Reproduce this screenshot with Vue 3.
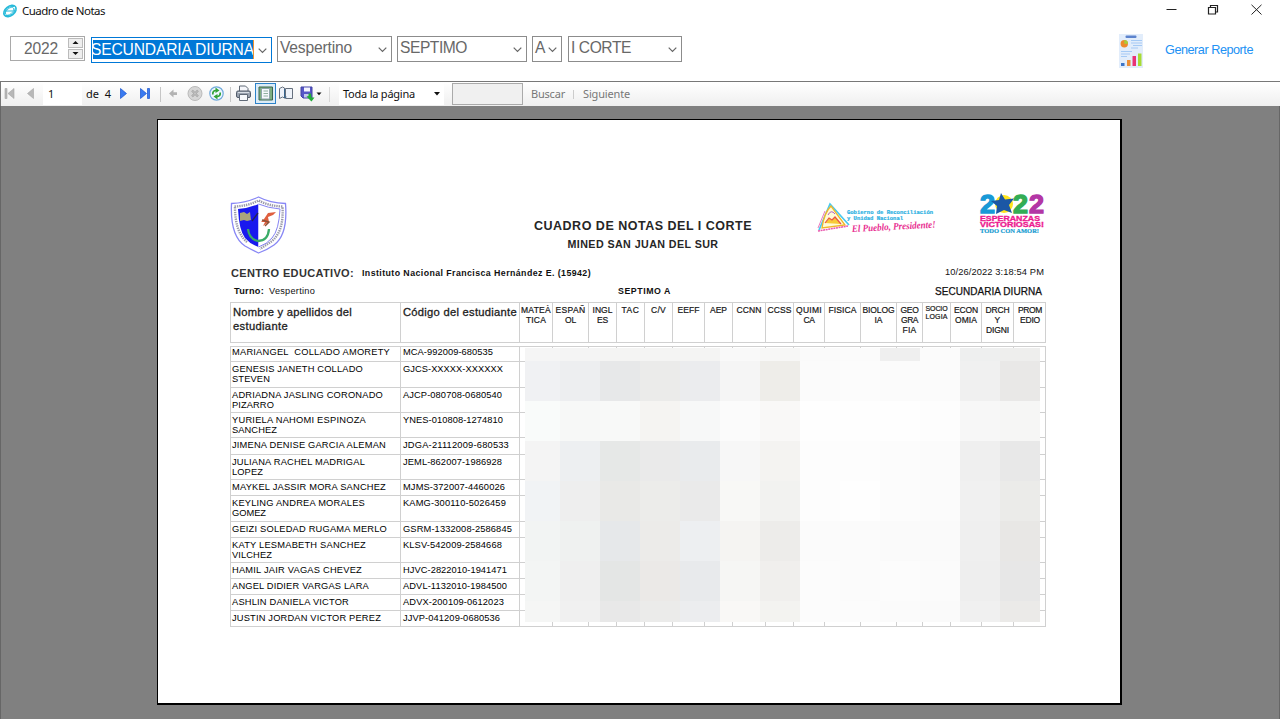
<script setup>
const fitText = (el, { value }) => {
  el.style.letterSpacing = '0px'
  const natural = el.getBoundingClientRect().width
  const count = el.textContent.trim().length
  if (count > 0) el.style.letterSpacing = `${(value - natural) / count}px`
}
const vFit = { mounted: fitText }

const combos = [
  { text: 'Vespertino', size: 'turn', w: 72 },
  { text: 'SEPTIMO', size: 'grade', w: 67 },
  { text: 'A', size: 'group', w: 10 },
  { text: 'I CORTE', size: 'term', w: 60 },
]

const subjects = [
  [['MATEÀ', 30], ['TICA', 20]],
  [['ESPAÑ', 30], ['OL', 11]],
  [['INGL', 20], ['ES', 11]],
  [['TAC', 18]],
  [['C/V', 15]],
  [['EEFF', 22]],
  [['AEP', 17]],
  [['CCNN', 25]],
  [['CCSS', 24]],
  [['QUIMI', 26], ['CA', 11]],
  [['FISICA', 28]],
  [['BIOLOG', 32], ['IA', 8]],
  [['GEO', 18], ['GRA', 17], ['FIA', 14]],
  [['SOCIO', 22], ['LOGIA', 22]],
  [['ECON', 24], ['OMIA', 22]],
  [['DRCH', 24], ['Y', 6], ['DIGNI', 23]],
  [['PROM', 24], ['EDIO', 20]],
]

const students = [
  { name: [['MARIANGEL\u00a0 COLLADO AMORETY', 158]], code: 'MCA-992009-680535', w: 90 },
  { name: [['GENESIS JANETH COLLADO', 131], ['STEVEN', 38]], code: 'GJCS-XXXXX-XXXXXX', w: 100 },
  { name: [['ADRIADNA JASLING CORONADO', 151], ['PIZARRO', 42]], code: 'AJCP-080708-0680540', w: 99 },
  { name: [['YURIELA NAHOMI ESPINOZA', 134], ['SANCHEZ', 45]], code: 'YNES-010808-1274810', w: 100 },
  { name: [['JIMENA DENISE GARCIA ALEMAN', 154]], code: 'JDGA-21112009-680533', w: 106 },
  { name: [['JULIANA RACHEL MADRIGAL', 133], ['LOPEZ', 31]], code: 'JEML-862007-1986928', w: 99 },
  { name: [['MAYKEL JASSIR MORA SANCHEZ', 154]], code: 'MJMS-372007-4460026', w: 102 },
  { name: [['KEYLING ANDREA MORALES', 133], ['GOMEZ', 34]], code: 'KAMG-300110-5026459', w: 103 },
  { name: [['GEIZI SOLEDAD RUGAMA MERLO', 155]], code: 'GSRM-1332008-2586845', w: 109 },
  { name: [['KATY LESMABETH SANCHEZ', 134], ['VILCHEZ', 40]], code: 'KLSV-542009-2584668', w: 99 },
  { name: [['HAMIL JAIR VAGAS CHEVEZ', 130]], code: 'HJVC-2822010-1941471', w: 104 },
  { name: [['ANGEL DIDIER VARGAS LARA', 137]], code: 'ADVL-1132010-1984500', w: 104 },
  { name: [['ASHLIN DANIELA VICTOR', 117]], code: 'ADVX-200109-0612023', w: 101 },
  { name: [['JUSTIN JORDAN VICTOR PEREZ', 149]], code: 'JJVP-041209-0680536', w: 97 },
]

const mosaic = [
  '#f5f5f5 #f4f4f4 #f4f4f3 #f4f4f3 #f4f4f3 #f9f9f9 #f7f7f6 #fafafa #fbfbfb #efefef #fbfbfb #eeefef #eeeeed',
  '#f0f1f3 #edeef0 #e7e8e9 #ebebea #ebecee #f5f5f5 #eeede9 #fbfbfb #fcfcfc #fbfbfb #fbfbfb #f0f0f0 #e9e8e7',
  '#f9fbfa #f7f8f7 #f8f9f8 #f5f4f2 #f7f8f8 #fbfbfb #f9f8f7 #fefefe #fefefe #fefefe #fdfdfd #f7f7f7 #f6f6f5',
  '#f4f4f4 #edeff1 #e6e8e7 #eaeaea #e9ebed #f7f7f7 #f4f3f1 #fdfdfd #fdfdfd #fcfcfc #fbfbfb #efefef #e8e8e8',
  '#f1f3f5 #eeeeee #e9e9e7 #ececea #eaeaea #f8f8f6 #f2f2f0 #fdfdfd #fefefe #fcfcfc #fbfbfb #f0f0f0 #ebebe9',
  '#f2f4f3 #eff1f0 #e6e8ea #ecebe9 #edeff1 #f5f4f2 #edecea #fbfbfb #fbfbfb #fafafa #fafafa #efefef #e8e7e5',
  '#f3f5f4 #efefef #e4e6e5 #ebe9e7 #e8eaec #f6f6f4 #f0efed #fcfcfc #fbfbfb #fcfcfc #fbfbfb #eeeeee #e7e7e7',
  '#f5f6f5 #f0f0f0 #e8e8e8 #ebebea #ecedef #f9f8f6 #f3f3f0 #fcfcfc #fcfcfc #fbfbfb #fafafa #f0f0f0 #ebeae8',
].map((row) => row.split(' '))
</script>

<template>
  <div class="window">
    <header class="titlebar">
      <svg class="app-icon" width="16" height="16" viewBox="0 0 16 16">
        <g fill="none" stroke="#25b9d9" transform="rotate(-38 8 8)">
          <ellipse cx="8" cy="8" rx="7" ry="4.700" stroke-width="1.500" />
          <ellipse cx="7.500" cy="8" rx="5" ry="2.800" stroke-width=".8" />
          <path d="M2 7Q8 1 14 7M2 9Q8 15 14 9M4 5L12 11" stroke-width=".9" />
        </g>
      </svg>
      <span class="caption"><span v-fit="83" class="run">Cuadro de Notas</span></span>
      <svg class="controls" width="110" height="22" viewBox="0 0 110 22" fill="none" stroke="#222" stroke-width="1">
        <path d="M6.500 9.500H16.500" />
        <path d="M48.500 7.500h7v6.500h-7zM50.500 7.500v-2h7v6.500h-2" stroke-width="1.200" />
        <path d="M91.500 4.800l10 9.700M101.500 4.800l-10 9.700" />
      </svg>
    </header>

    <section class="filters">
      <div class="spinner">
        <span class="year"><span v-fit="34" class="run">2022</span></span>
        <div class="steps">
          <i><svg width="13" height="10" viewBox="0 0 13 10"><path d="M3.500 6L6.500 3L9.500 6z" /></svg></i>
          <i><svg width="13" height="10" viewBox="0 0 13 10"><path d="M3.500 3L6.500 6L9.500 3z" /></svg></i>
        </div>
      </div>
      <div class="combo level">
        <span class="selected"><span v-fit="163" class="run">SECUNDARIA DIURNA</span></span>
        <svg width="9" height="6" viewBox="0 0 9 6"><path d="M.7.700L4.500 4.500L8.300.7" /></svg>
      </div>
      <div v-for="c in combos" :key="c.text" class="combo" :class="c.size">
        <span class="value"><span v-fit="c.w" class="run">{{ c.text }}</span></span>
        <svg width="9" height="6" viewBox="0 0 9 6"><path d="M.7.700L4.500 4.500L8.300.7" /></svg>
      </div>
      <button class="generate">
        <svg width="24" height="34" viewBox="0 0 24 34">
          <rect width="24" height="34" fill="#e2edfb" />
          <rect x="6.500" y="1.500" width="11" height="2.600" rx="1" fill="#5c83cd" />
          <circle cx="5.300" cy="9.700" r="3.700" fill="#ed8b2c" />
          <path d="M5.300 9.700V6a3.700 3.700 0 0 1 3.700 3.700z" fill="#a6cf3d" />
          <path d="M12 6.500h11M12 9h11M14 11.500h9M12 14h7M2 17.500h11M2 20h9M2 22.500h6" stroke="#a5caf5" stroke-width="1.200" />
          <path d="M2 29h3.500v3H2z" fill="#3b75c9" /><path d="M8 26h3.500v6H8z" fill="#ec8e36" />
          <path d="M13.500 22H17v10h-3.500z" fill="#ea3275" /><path d="M19 19.500h3.500V32H19z" fill="#a8db34" />
        </svg>
        <span class="generate-label"><span v-fit="88" class="run">Generar Reporte</span></span>
      </button>
    </section>

    <nav class="viewer-bar">
      <svg class="nav-first" width="42" height="24" viewBox="0 0 42 24" fill="#b8b8b8" stroke="#a5a5a5" stroke-width=".6">
        <path d="M4 6.500h2v10H4zM13 6.500v10l-6-5zM32.500 6.500v10l-6-5z" />
      </svg>
      <span class="page-no">1</span>
      <span class="page-total"><span v-fit="25" class="run">de&nbsp; 4</span></span>
      <svg class="nav-last" width="55" height="24" viewBox="0 0 55 24">
        <g fill="#397af0" stroke="#1552ce" stroke-width=".7"><path d="M3.500 6.500v10l6-5zM23.500 6.500v10l6-5zM30.500 6.500h2v10h-2z" /></g>
        <path d="M43.500 5v15" stroke="#c6c6c6" />
      </svg>
      <svg class="tools" width="162" height="24" viewBox="0 0 162 24">
        <path d="M1 11.500l4.500-4v2.700h3.500v2.700H5.500v2.700z" fill="#b3b3b3" />
        <circle cx="27" cy="11.500" r="7" fill="#d6d6d6" stroke="#bababa" />
        <path d="M24 8.500l6 6m0-6l-6 6" stroke="#a0a0a0" stroke-width="2.300" /><path d="M24 8.500l6 6m0-6l-6 6" stroke="#ddd" stroke-width=".7" />
        <circle cx="48.500" cy="11.500" r="6.700" fill="#edf6ff" stroke="#70a9dc" stroke-width="1.200" />
        <g fill="none" stroke="#30a337" stroke-width="1.700"><path d="M44.800 12.500q-.3-4 3.200-4M52.200 10.500q.3 4-3.200 4" /></g>
        <path d="M47.500 5.500l4 3l-4 2.500zM49.500 12l-4 2.500l4 3z" fill="#30a337" />
        <path d="M62.500 5v15" stroke="#c6c6c6" />
        <g><path d="M71.500 9V4h6l2.500 2.500V9" fill="#f5f6fa" stroke="#5f6874" /><rect x="68.500" y="9" width="14" height="6.500" rx="1.500" fill="#99a2af" stroke="#515b69" /><path d="M71.500 12.500h8v6h-8z" fill="#f6f9fc" stroke="#606a77" /><path d="M70 10.500h11" stroke="#d8dee5" /></g>
        <rect x="87.500" y="1.500" width="20" height="20" fill="#dcecf7" stroke="#2c82c9" />
        <path d="M91 5h13.500v13H91z" fill="#7eae80" stroke="#3c6650" /><path d="M93.500 6.500h8v10.500h-8z" fill="#f5f8fd" stroke="#8ea5ab" /><path d="M95.500 9h4.500M95.500 11.500h4.500M95.500 14h4.500" stroke="#8fb0a0" />
        <g fill="#eef2f9" stroke="#66707e"><path d="M111.500 6.500l3-1.500l2 1v10l-2-1l-3 1.500zM117.500 6.500h7v10h-7z" /></g><path d="M116.500 7v9l2-1" fill="none" stroke="#38658d" />
        <path d="M133 5h11v11h-9l-2-2z" fill="#5657c7" stroke="#4242a4" /><path d="M136 5.500h6v4h-6z" fill="#f4f4ff" /><path d="M136 12h5v3.500h-5z" fill="#c5c9ee" /><path d="M140.500 11.500v2.500l-2 .5l5 5l3-4h-3l-.5-4z" fill="#22ac38" />
        <path d="M148.500 10.500h5l-2.500 2.700z" fill="#111" /><path d="M162 5v15" stroke="#bbb" />
      </svg>
      <div class="zoom"><span><span v-fit="72" class="run">Toda la página</span></span><svg width="6" height="4" viewBox="0 0 6 4"><path d="M0 0h6L3 3.500z" fill="#111" /></svg></div>
      <div class="search-box"></div>
      <span class="search"><span v-fit="34" class="run">Buscar</span></span>
      <i class="bar"></i>
      <span class="next"><span v-fit="47" class="run">Siguiente</span></span>
    </nav>

    <main class="viewport">
      <article class="sheet">
        <div class="masthead">
          <svg class="shield" width="57" height="58" viewBox="0 0 57 58">
            <path d="M1.500 7.500Q16 7 28.500 1Q40 7 55.500 7.500Q58 39 44 49Q37 54 28.500 57Q22 54 15 50Q0 40 1.500 7.500z" fill="#fff" stroke="#8887f5" stroke-width="1.300" />
            <path d="M4.500 10.500Q18 10 28.500 4.500Q39 10 52.500 10.500Q54 35 42 45L30 53" fill="none" stroke="#9a9aab" stroke-width="2.400" stroke-dasharray="1.400 .9" />
            <path d="M5 11Q5 36 17 46" fill="none" stroke="#9a9aab" stroke-width="2.400" stroke-dasharray="1.400 .9" />
            <path d="M8 13Q20 12 28.500 8V51Q20 48 15 42Q9 34 8 13z" fill="#1919ee" />
            <path d="M28.500 8Q38 12 50 13Q49 34 42 42Q37 48 28.500 51" fill="#fff" stroke="#8583f3" />
            <path d="M10 17l4-1l3 2l3-2l1 8l-4 1l-3-1l-4 1z" fill="#a9a57c" /><path d="M22 25l6-8" stroke="#252553" stroke-width="1.300" />
            <path d="M34 23l4-6l8-1l-3 3l-5 2l1 5l-6 4l2-4h-4z" fill="#df5f3f" /><path d="M32 24l7 2l-4 4" fill="none" stroke="#8b5237" stroke-width="1.400" />
            <path d="M18 33Q19 43 28 45Q38 45 39 33" fill="none" stroke="#3bac68" stroke-width="2.300" />
          </svg>
          <div class="heading">
            <h1><span v-fit="218" class="run">CUADRO DE NOTAS DEL I CORTE</span></h1>
            <h2><span v-fit="151" class="run">MINED SAN JUAN DEL SUR</span></h2>
          </div>
          <svg class="government" width="122" height="34" viewBox="0 0 122 34">
            <path d="M2 29L13 3L32 24" fill="none" stroke="#48c9ef" stroke-width="1.700" />
            <path d="M5 27Q7 12 14 5L28 24z" fill="#fffbd7" stroke="#f0b629" stroke-width="1.300" />
            <path d="M8 22l4-5l3 2l3-3l6 7" fill="#f8ca38" stroke="#e95447" stroke-width="1.200" /><path d="M11 14q3-6 7-1" fill="none" stroke="#b15bc7" />
            <path d="M1 30l30-5" stroke="#e858ae" stroke-width="1.500" stroke-dasharray="2 .6" /><path d="M1 27L8 10" stroke="#ef78ba" />
            <g font-family="Liberation Mono, monospace" font-weight="700" font-size="5.800" fill="#2ab0e2" stroke="#2ab0e2" stroke-width=".2"><text x="30" y="13" textLength="86" lengthAdjust="spacingAndGlyphs">Gobierno de Reconciliación</text><text x="30" y="19" textLength="56" lengthAdjust="spacingAndGlyphs">y Unidad Nacional</text></g>
            <text x="35" y="31" font-family="Liberation Serif, serif" font-style="italic" font-weight="700" font-size="10" fill="#e82f91" textLength="84" lengthAdjust="spacingAndGlyphs" transform="rotate(-3 35 31)">El Pueblo, Presidente!</text>
          </svg>
          <svg class="hope" width="68" height="46" viewBox="0 0 68 46" font-family="Liberation Sans, sans-serif" font-weight="700">
            <circle cx="24" cy="12" r="9" fill="#ffe51e" />
            <g font-size="25" stroke-width="1.300"><text x="0" y="20.500" fill="#1899d6" stroke="#1899d6" textLength="15" lengthAdjust="spacingAndGlyphs">2</text><text x="33" y="20.500" fill="#33ad54" stroke="#33ad54" textLength="15" lengthAdjust="spacingAndGlyphs">2</text><text x="49" y="20.500" fill="#b336a5" stroke="#b336a5" textLength="15" lengthAdjust="spacingAndGlyphs">2</text></g>
            <path d="M21 1l4 6.500l9-1l-5 6.500l3 8l-8-3l-8 4l1-8l-6-5l8-1z" fill="#1b57a5" />
            <g fill="#ed1990" stroke="#ed1990" stroke-width=".35" font-size="8"><text x="0" y="28.500" textLength="60" lengthAdjust="spacingAndGlyphs">ESPERANZAS</text><text x="0" y="35" textLength="64" lengthAdjust="spacingAndGlyphs">VICTORIOSAS!</text></g>
            <text x="0" y="41" font-family="Liberation Serif, serif" font-size="7" fill="#169bd1" stroke="#169bd1" stroke-width=".2" textLength="59" lengthAdjust="spacingAndGlyphs">TODO CON AMOR!</text>
          </svg>
        </div>

        <div class="school">
          <b class="school-label"><span v-fit="123" class="run">CENTRO EDUCATIVO:</span></b>
          <b class="school-name"><span v-fit="229" class="run">Instituto Nacional Francisca Hernández E. (15942)</span></b>
          <span class="stamp"><span v-fit="99" class="run">10/26/2022 3:18:54 PM</span></span>
        </div>
        <div class="shift">
          <span class="shift-name"><b v-fit="30" class="run">Turno:</b><span v-fit="46" class="run">Vespertino</span></span>
          <b class="grade-name"><span v-fit="53" class="run">SEPTIMO A</span></b>
          <span class="modality"><span v-fit="107" class="run">SECUNDARIA DIURNA</span></span>
        </div>

        <div class="grid head">
          <div class="cell column-title"><div><span v-fit="119" class="run">Nombre y apellidos del</span></div><div><span v-fit="55" class="run">estudiante</span></div></div>
          <div class="cell column-title"><div><span v-fit="114" class="run">Código del estudiante</span></div></div>
          <div v-for="(s, i) in subjects" :key="i" class="cell subject" :class="{ small: i === 13 }">
            <div v-for="line in s" :key="line[0]"><span v-fit="line[1]" class="run">{{ line[0] }}</span></div>
          </div>
        </div>

        <div class="grid body">
          <template v-for="(s, i) in students" :key="s.code">
            <div class="cell" :class="{ top: i === 0 }"><div v-for="line in s.name" :key="line[0]"><span v-fit="line[1]" class="run">{{ line[0] }}</span></div></div>
            <div class="cell code" :class="{ top: i === 0 }"><span v-fit="s.w" class="run">{{ s.code }}</span></div>
            <div v-for="n in 17" :key="n" class="cell"></div>
          </template>
          <div class="mosaic">
            <template v-for="(row, r) in mosaic" :key="r"><i v-for="(color, c) in row" :key="c" :style="{ background: color }"></i></template>
          </div>
        </div>
      </article>
    </main>
  </div>
</template>

<style>
html, body { margin: 0; overflow: hidden; }
</style>

<style scoped>
* { box-sizing: border-box; }
.window { width: 1280px; height: 719px; display: flex; flex-direction: column; background: #fff; font-family: "Liberation Sans", Arial, sans-serif; overflow: hidden; }
.run { display: inline-block; white-space: nowrap; }
.titlebar { height: 23px; display: flex; align-items: flex-start; padding-left: 2px; flex: none; }
.app-icon { margin-top: 3px; }
.caption { margin: 3px auto 0 4px; font: 11.500px/16px "Noto Sans", sans-serif; color: #111; }
.controls { margin-right: 10px; }
.filters { height: 58px; flex: none; display: flex; align-items: flex-start; padding: 13px 17px 0 10px; color: #686868; font-size: 15.600px; }
.spinner { width: 75px; height: 25px; margin-right: 6px; border: 1px solid #a9a9a9; display: flex; padding: 1px; }
.year { flex: 1; padding-left: 12px; line-height: 21px; }
.steps { width: 15px; display: flex; flex-direction: column; gap: 1px; }
.steps i { height: 10px; border: 1px solid #bbb; background: #eee; display: flex; overflow: hidden; }
.steps svg { display: block; margin-top: -1px; fill: #111; }
.combo { height: 26px; flex: none; border: 1px solid #8c8c8c; display: flex; align-items: center; justify-content: space-between; padding: 0 4px 0 2px; background: #fff; }
.combo svg { fill: none; stroke: #666; stroke-width: 1.200; flex: none; margin-top: 1px; }
.value { line-height: 22px; margin-top: -2px; }
.level { width: 181px; margin-top: 1px; margin-right: 5px; border-color: #0078d7; padding-left: 1px; }
.selected { width: 161px; height: 19px; margin-top: -1px; overflow: hidden; background: #0078d7; color: #fff; line-height: 19px; border-right: 1px solid #ef9130; }
.selected .run { margin-left: -2px; }
.turn { width: 115px; margin-right: 5px; }
.grade { width: 130px; margin-right: 5px; }
.group { width: 30px; margin-right: 6px; }
.term { width: 114px; }
.generate { display: flex; align-items: center; margin: -2px 10px 0 auto; padding: 0; border: 0; background: none; font: 12.700px "Liberation Sans", sans-serif; color: #2191f4; }
.generate-label { margin-left: 22px; margin-top: -3px; }
.viewer-bar { height: 25px; flex: none; border-top: 1px solid #777; border-left: 1px solid #777; background: linear-gradient(#fff, #efefef); display: flex; align-items: center; font: 11px/16px "Noto Sans", sans-serif; color: #111; }
.viewer-bar svg { display: block; flex: none; }
.page-no { width: 39px; height: 22px; padding-left: 5px; line-height: 22px; background: #fff; }
.page-total { width: 30px; padding-left: 4px; }
.nav-last { margin-left: 5px; padding: 0; }
.tools { margin-left: -4px; }
.zoom { width: 105px; height: 22px; margin-left: 9px; padding: 0 4px; display: flex; align-items: center; justify-content: space-between; background: #fff; }
.search-box { width: 71px; height: 22px; margin-left: 8px; border: 1px solid #aaa; background: #f0f0f0; }
.search { margin-left: 8px; color: #777; }
.bar { width: 1px; height: 9px; margin-left: 8px; background: #ccc; }
.next { margin-left: 9px; color: #777; }
.viewport { flex: 1; padding: 13px 0 0 156px; background: #808080; border-left: 1px solid #666; border-right: 1px solid #666; }
.sheet { width: 965px; height: 586px; border: 1px solid #000; border-right-width: 2px; border-bottom-width: 2px; background: #fff; padding: 72px 0 0 72px; color: #111; }
.masthead { display: flex; align-items: flex-start; height: 70px; }
.shield { margin: 4px 0 0; }
.heading { width: 218px; margin: 27px 0 0 247px; text-align: center; color: #262626; }
h1 { margin: 0; font-size: 12.500px; line-height: 15px; }
h2 { margin: 4px 0 0; font-size: 10.700px; line-height: 13px; }
.government { margin: 9px 0 0 65px; overflow: visible; }
.hope { margin: 0 0 0 41px; overflow: visible; }
.school { width: 816px; height: 21px; display: flex; align-items: center; padding: 0 2px 0 1px; }
.school-label { font-size: 11px; color: #333; padding-top: 1px; }
.school-name { margin-left: 8px; font-size: 8.800px; }
.stamp { margin-left: auto; font-size: 9.300px; margin-top: -1px; }
.shift { width: 816px; display: grid; grid-template-columns: 384px 1fr auto; align-items: center; height: 19px; padding: 0 4px 3px 4px; font-size: 9.200px; }
.shift-name { display: flex; gap: 5px; }
.grade-name { font-size: 8.800px; }
.modality { font-size: 10px; -webkit-text-stroke: .25px #111; }
.grid { width: 816px; display: grid; grid-template-columns: 170px 119px 33px 36px 28px 28px 28px 32px 28px 33px 28px 31px 36px 36px 26px 28px 31px 32px 33px; border-right: 1px solid #d0d0d0; border-bottom: 1px solid #d0d0d0; }
.cell { border-left: 1px solid #d0d0d0; border-top: 1px solid #d0d0d0; padding: 2px 0 0 1px; min-width: 0; }
.head { height: 41px; }
.column-title { font-size: 11.200px; line-height: 14px; padding-left: 2px; color: #222; -webkit-text-stroke: .3px #222; }
.subject { font-size: 8.500px; line-height: 10.200px; text-align: center; padding-left: 0; -webkit-text-stroke: .2px #222; }
.subject > div { display: flex; justify-content: center; }
.small { font-size: 7px; line-height: 8px; }
.body { position: relative; margin-top: 3px; height: 281px; grid-template-rows: 15px 26px 25px 25px 17px 25px 16px 26px 16px 25px 16px 16px 16px 16px; font-size: 9.300px; line-height: 10.200px; color: #000; }
.body .cell { padding-top: 2px; }
.body .top { padding-top: 0; }
.body .code { padding-left: 2px; }
.mosaic { position: absolute; left: 295px; top: 2px; display: grid; grid-template-columns: 35px repeat(12, 40px); grid-template-rows: 13px repeat(6, 40px) 21px; }
</style>
